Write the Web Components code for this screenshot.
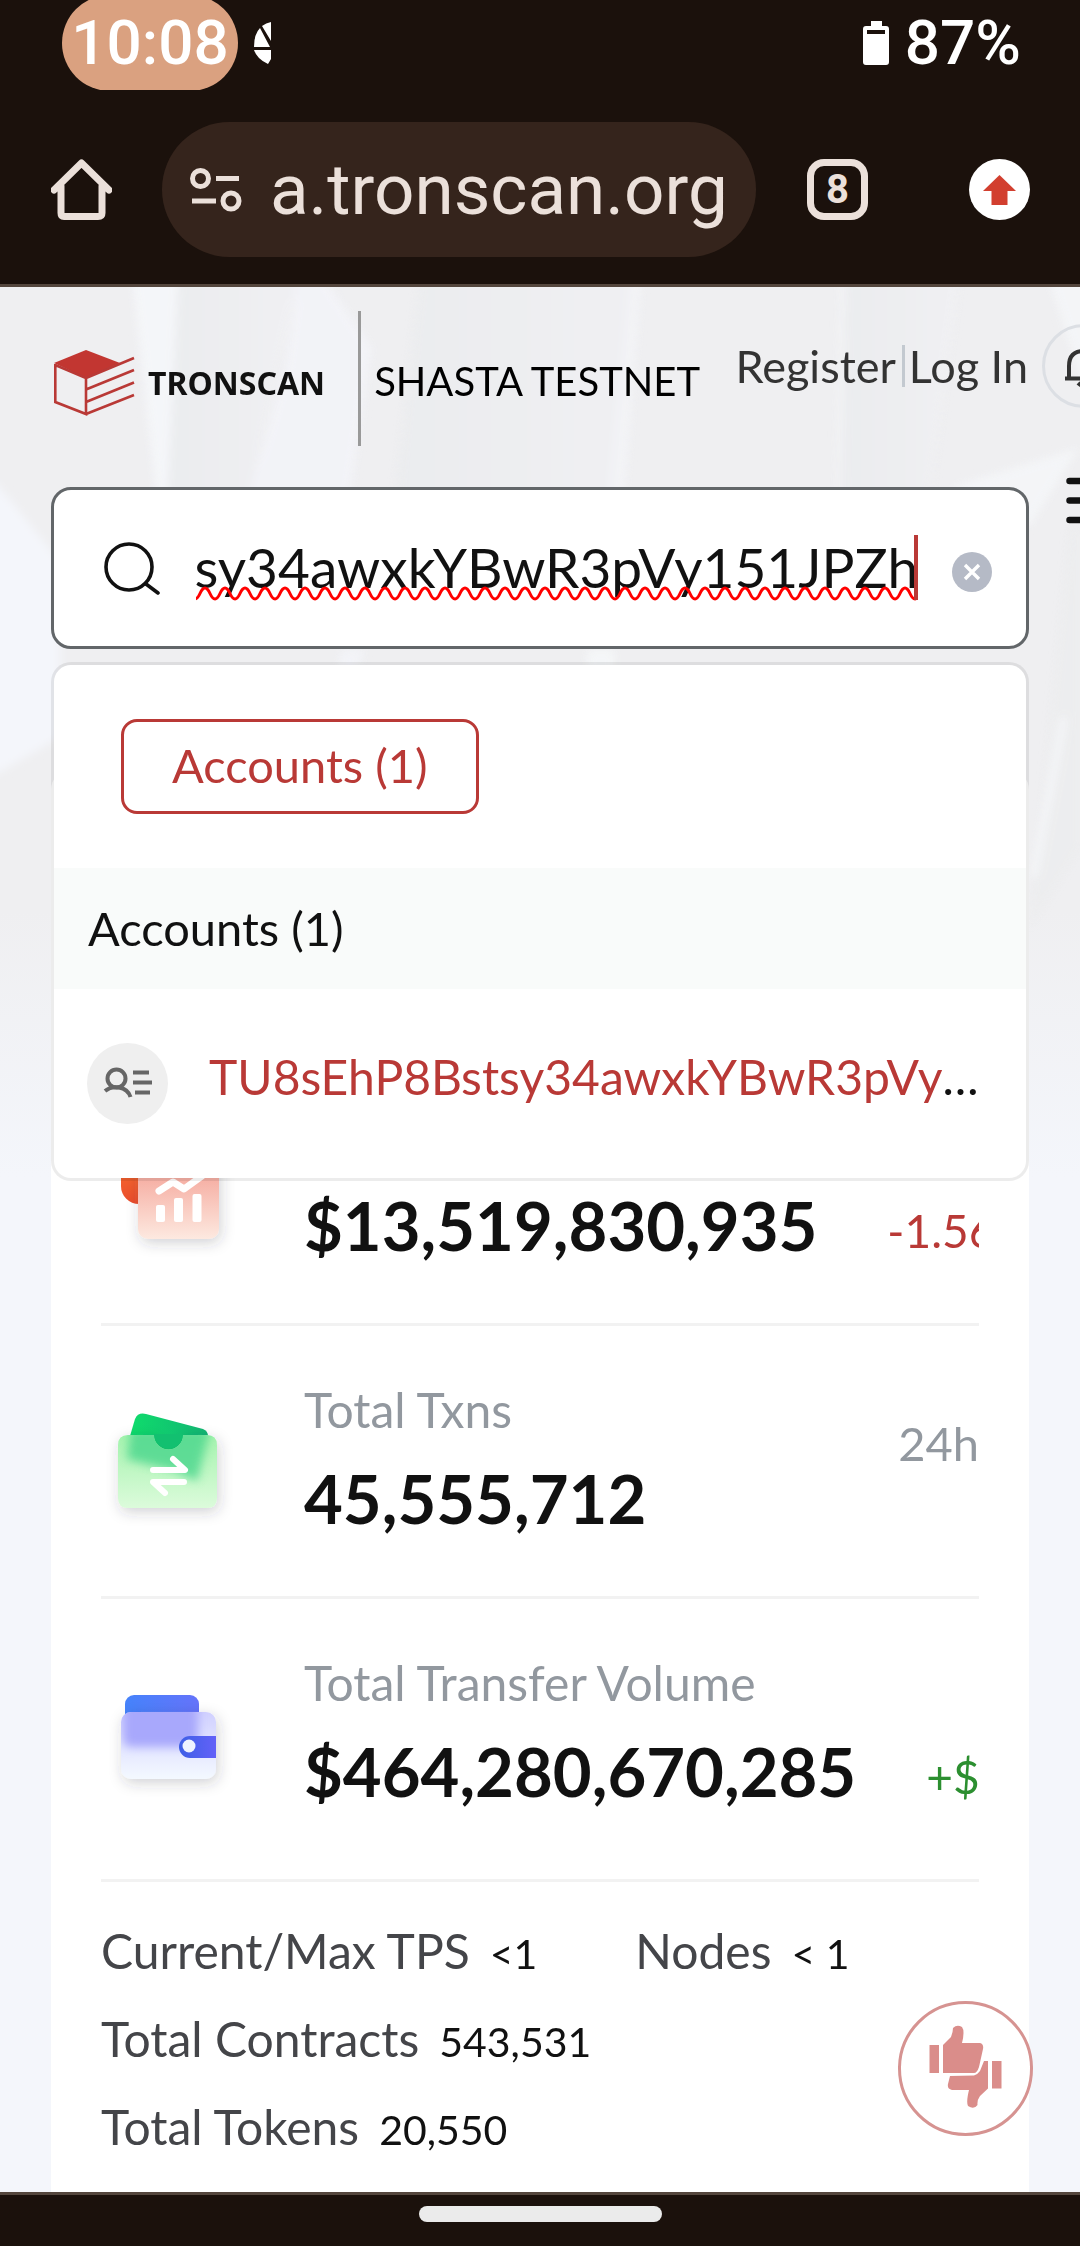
<!DOCTYPE html>
<html lang="en">
<head>
<meta charset="utf-8">
<meta name="viewport" content="width=device-width, initial-scale=1">
<title>TRONSCAN | Shasta Testnet</title>
<style>
  html, body { margin: 0; }
  body {
    --red: #b93936;
    --chrome: #1b110c;
    --chrome-line: #54463d;
    --chrome-ink: #ebe0da;
    display: flex;
    flex-direction: column;
    min-height: 100vh;
    background: #f4f6fb;
    color: #111;
    font-family: Lato, "Open Sans", sans-serif;
    overflow-x: hidden;
  }
</style>
</head>
<body>
<status-bar time="10:08" battery="87%"></status-bar>
<browser-bar url="a.tronscan.org" tabs="8"></browser-bar>
<scan-page>
  <site-header network="SHASTA TESTNET"></site-header>
  <search-box value="TU8sEhP8Bstsy34awxkYBwR3pVy151JPZh">
    <search-results heading="Accounts (1)" address="TU8sEhP8Bstsy34awxkYBwR3pVy151JPZh"></search-results>
  </search-box>
  <stats-card>
    <stat-row tone="down">
      <icon-chart slot="icon"></icon-chart>
      <span slot="value">$13,519,830,935</span>
      <span slot="delta">-1.56</span>
    </stat-row>
    <stat-row>
      <icon-exchange slot="icon"></icon-exchange>
      <span slot="label">Total Txns</span>
      <span slot="value">45,555,712</span>
      <span slot="period">24h</span>
    </stat-row>
    <stat-row tone="up" last>
      <icon-wallet slot="icon"></icon-wallet>
      <span slot="label">Total Transfer Volume</span>
      <span slot="value">$464,280,670,285</span>
      <span slot="delta">+$</span>
    </stat-row>
    <info-item slot="info" label="Current/Max TPS">&lt;1</info-item>
    <info-item slot="info" label="Nodes">&lt; 1</info-item>
    <info-item slot="info" label="Total Contracts">543,531</info-item>
    <info-item slot="info" label="Total Tokens">20,550</info-item>
  </stats-card>
  <feedback-button slot="floating"></feedback-button>
</scan-page>
<nav-handle></nav-handle>

<script>
  const define = (name, render, after) => customElements.define(name, class extends HTMLElement {
    connectedCallback() {
      if (this.shadowRoot) return;
      this.attachShadow({ mode: 'open' }).innerHTML =
        '<style>*{box-sizing:border-box}svg{display:block}a{color:inherit;text-decoration:none}' +
        'button{font:inherit;color:inherit;background:none;border:0;padding:0;margin:0;cursor:pointer}</style>' +
        render(this);
      if (after) after(this.shadowRoot);
    }
  });
  const attr = (el, name) => el.getAttribute(name) || '';

  define('status-bar', el => `
    <style>
      :host { display: flex; justify-content: space-between; height: 90px; padding: 0 59px 0 62px;
        background: var(--chrome); color: #fff; font: 500 62px/70px Roboto, sans-serif; overflow: hidden; }
      .side { display: flex; align-items: center; gap: 16px; height: 86px; }
      .time { background: #daa180; border-radius: 48px; width: 176px; height: 96px; line-height: 88px; padding-top: 4px; text-align: center; }
    </style>
    <div class="side"><div class="time">${attr(el, 'time')}</div>
      <svg width="17" height="44" viewBox="0 0 17 44" fill="#fff"><path d="M17 1Q12 2 8 5L17 20ZM6 7Q0 13 0 26H16Z M0 29Q3 38 14 43L17 38V29Z"/></svg></div>
    <div class="side"><svg width="26" height="44" viewBox="0 0 26 44"><path fill="#fff" fill-rule="evenodd" d="M8 0H19V5H23Q26 5 26 8V41Q26 44 23 44H3Q0 44 0 41V8Q0 5 3 5H8ZM4 9V13H22V9Z"/></svg>
      <span>${attr(el, 'battery')}</span></div>`);

  define('browser-bar', el => `
    <style>
      :host { display: flex; align-items: center; height: 197px; padding: 5px 50px 0 51px;
        background: var(--chrome); border-bottom: 3px solid var(--chrome-line); box-sizing: border-box; color: var(--chrome-ink); }
      .omni { display: flex; align-items: center; gap: 28px; flex: 1; height: 135px; margin: 0 51px 0 50px; padding: 0 28px;
        border-radius: 68px; background: #35241c; min-width: 0; font: 71px/90px Roboto, sans-serif; }
      .tabs { width: 61px; height: 61px; border: 7px solid; border-radius: 17px; font: 700 40px/47px "Liberation Sans Narrow", Roboto, sans-serif; }
      .update { margin-left: 101px; }
    </style>
    <button aria-label="Home"><svg width="61" height="61" viewBox="0 0 61 61" fill="none" stroke="currentColor" stroke-width="7" stroke-linecap="round" stroke-linejoin="round"><path d="M3 31L30.500 4L58 31M10 27V54Q10 57.500 13 57.500H47Q51 57.500 51 54V27"/></svg></button>
    <div class="omni"><svg width="52" height="44" viewBox="0 0 52 44" fill="none" stroke="currentColor" stroke-width="5"><circle cx="10.500" cy="10.500" r="8"/><path d="M26 10.500H49M2 33H26"/><circle cx="41" cy="33" r="8"/></svg><span>${attr(el, 'url')}</span></div>
    <button class="tabs" aria-label="Tabs">${attr(el, 'tabs')}</button>
    <button class="update" aria-label="Update"><svg width="61" height="61" viewBox="0 0 61 61"><circle cx="30.500" cy="30.500" r="30.500" fill="#fff"/><path fill="#d23f2f" d="M30.500 16L47 32H38.500V46H22.500V32H14Z"/></svg></button>`);

  define('scan-page', () => `
    <style>
      :host { display: block; position: relative; flex: 1; overflow: hidden; }
      .bg { position: absolute; inset: 0 0 auto 0; width: 100%; height: 890px; }
      ::slotted([slot=floating]) { position: absolute; right: 47px; bottom: 56px; }
      main { position: relative; }
    </style>
    <svg class="bg" viewBox="0 0 1080 890" preserveAspectRatio="none" aria-hidden="true">
      <defs>
        <linearGradient id="a" x2="0" y2="1"><stop offset=".7" stop-color="#efeff1"/><stop offset="1" stop-color="#f4f6fb"/></linearGradient>
        <linearGradient id="b"><stop stop-color="#e9ebed"/><stop offset="1" stop-color="#f1f1f4"/></linearGradient>
        <filter id="s"><feGaussianBlur stdDeviation="4"/></filter>
      </defs>
      <path fill="url(#a)" d="M0 0H1080V890H0Z"/>
      <path fill="#f4f6fb" filter="url(#s)" d="M-9 190L20 225L60 275V450L-9 490Z"/>
      <g filter="url(#s)" opacity=".7">
        <path fill="#f7f9fc" d="M132 -9H178L168 210H156Z"/>
        <path fill="url(#b)" d="M178 -9H300L250 210H168Z"/>
        <path fill="#f4f5fa" d="M298 -9H325L372 60L350 210H248L285 80Z"/>
        <path fill="url(#b)" d="M420 -9H640L612 210H395Z"/>
        <path fill="#f4f5f8" d="M632 -9H642L625 210H608Z"/>
        <path fill="#f5f6f8" d="M840 -9H846L840 210H836Z"/>
        <path fill="url(#b)" d="M846 -9H960L930 210H842Z"/>
        <path fill="#f6f8fa" d="M950 200L1080 160L1030 240Z"/>
        <path fill="#f6f8fa" d="M1048 -9L1090 120V-9Z"/>
        <path fill="#e9ebec" d="M1070 240L1030 640L1080 560V240Z" opacity=".5"/>
        <path fill="#f6f8fa" d="M1060 430L1030 590H1038L1068 430Z"/>
        <path fill="#f4f6fb" d="M342 362H365L355 390H335Z"/>
        <path fill="#f7f9fb" d="M588 362H615V390H584Z"/>
      </g>
    </svg>
    <main><slot></slot></main><slot name="floating"></slot>`);

  define('site-header', el => `
    <style>
      :host { display: flex; align-items: center; height: 200px; box-sizing: border-box; padding: 24px 0 41px 54px; white-space: nowrap; }
      .logo { display: flex; align-items: center; gap: 14px; padding-top: 8px; font: 700 32px/40px "Noto Sans", sans-serif; }
      .net { margin-left: 33px; border-left: 3px solid #999; padding-left: 13px; padding-top: 6px; font-size: 40px; line-height: 129px; color: #000; }
      nav { display: flex; align-items: center; margin-left: auto; padding-bottom: 26px; font-size: 45px; line-height: 54px; color: #333; }
      .sep { width: 3px; height: 42px; margin: 0 4px 0 6px; background: #c3c9d0; }
      .bell { flex: 0 0 38px; width: 38px; margin-left: 14px; }
      svg { overflow: visible; }
    </style>
    <a class="logo" href="#">
      <svg width="80" height="66" viewBox="0 0 80 66" fill="none" stroke="#b93936" stroke-width="2.600"><path fill="#c23631" stroke="none" d="M32 0L66 13L32 28L0 13Z"/><path d="M1.300 14V52L32 64V28L1.300 15M32 28L80 8M32 39.500L80 20M32 52L80 32.500M32 64L80 45"/></svg>
      <span>TRONSCAN</span></a>
    <span class="net">${attr(el, 'network')}</span>
    <nav><a href="#">Register</a><span class="sep"></span><a href="#">Log In</a>
      <button class="bell" aria-label="Notifications"><svg width="84" height="84" viewBox="0 0 84 84" fill="none"><circle cx="42" cy="42" r="40.500" stroke="#dcdfe4" stroke-width="3"/><path stroke="#333" stroke-width="4" d="M23 54.500H61M27 54V42Q27 27 42 27Q57 27 57 42V54"/><path stroke="#333" stroke-width="4" d="M36 59Q42 65 48 59"/></svg></button></nav>`);

  define('search-box', el => `
    <style>
      :host { display: flex; position: relative; z-index: 2; padding-left: 51px; }
      .box { display: flex; align-items: center; flex: 1; min-width: 0; height: 162px; padding: 0 34px 0 50px;
        background: #fff; border: 3px solid #626669; border-radius: 20px; }
      .field { position: relative; flex: 1; min-width: 0; margin: 0 34px 0 35px; }
      input { display: block; width: 100%; height: 84px; padding: 0 0 2px; border: 0; outline: 0; background: none; color: #111; font: 55px/82px Lato, sans-serif; }
      .wave { position: absolute; left: 0; bottom: 9px; width: 100%; height: 15px; }
      .caret { position: absolute; right: 0; top: 9px; width: 4px; height: 65px; background: var(--red); }
      .clear { padding-top: 8px; }
      .menu { flex: 0 0 14px; width: 14px; margin: -10px 0 0 37px; align-self: flex-start; }
      .menu svg { overflow: visible; }
      .drop { position: absolute; top: calc(100% + 13px); left: 51px; right: 51px; }
    </style>
    <div class="box">
      <svg width="57" height="53" viewBox="0 0 57 53" fill="none" stroke="#111" stroke-width="3.600" stroke-linecap="round"><circle cx="25" cy="25" r="23"/><path d="M42 42L54 51"/></svg>
      <div class="field"><input type="text" aria-label="Search" spellcheck="false" value="${attr(el, 'value')}">
        <svg class="wave" aria-hidden="true"><defs><pattern id="w" width="20" height="15" patternUnits="userSpaceOnUse"><path d="M-11 2C-6 2-6 13 -1 13S4 2 9 2S14 13 19 13S24 2 29 2" fill="none" stroke="#f00" stroke-width="3"/></pattern></defs><rect width="100%" height="15" fill="url(#w)"/></svg>
        <span class="caret"></span></div>
      <button class="clear" aria-label="Clear"><svg width="40" height="40" viewBox="0 0 40 40"><circle cx="20" cy="20" r="20" fill="#b5bac6"/><path d="M13 13L27 27M27 13L13 27" stroke="#fff" stroke-width="3.400"/></svg></button>
    </div>
    <button class="menu" aria-label="Menu"><svg width="14" height="48" viewBox="0 0 14 48" stroke="#111" stroke-width="6.500" stroke-linecap="round"><path d="M3.500 4H50M3.500 23.500H50M3.500 43H50"/></svg></button>
    <div class="drop"><slot></slot></div>`,
    root => { const i = root.querySelector('input'); i.scrollLeft = i.scrollWidth; });

  define('search-results', el => `
    <style>
      :host { display: block; background: #fff; background-clip: padding-box; border: 3px solid rgba(0,0,0,.075); border-radius: 20px; font-size: 47px; line-height: 56px; overflow: hidden; }
      .tabs { padding: 54px 67px; }
      .tab { display: block; height: 95px; padding: 0 48px 4px; border: 3px solid var(--red); border-radius: 16px; color: var(--red); }
      h2 { margin: 0; padding: 0 34px; background: #f9fbfa; font: inherit; line-height: 121px; }
      .row { display: flex; align-items: center; gap: 41px; padding: 54px 40px 54px 33px; }
      .row svg { flex: none; }
      .addr { flex: 1; min-width: 0; overflow: hidden; text-overflow: ellipsis; white-space: nowrap; padding-bottom: 14px; font-size: 48px; }
      .addr a { color: var(--red); }
    </style>
    <div class="tabs"><button class="tab">${attr(el, 'heading')}</button></div>
    <h2>${attr(el, 'heading')}</h2>
    <div class="row">
      <svg width="81" height="81" viewBox="0 0 81 81" fill="none" stroke="#666" stroke-width="4"><circle cx="40.500" cy="40.500" r="40.500" fill="#efefef" stroke="none"/><circle cx="29.500" cy="35.500" r="9"/><path d="M18 48Q24 43 32 44.500Q41 46 43.500 54"/><path d="M46 29.500H62M46 39.500H65M48 49.500H63"/></svg>
      <div class="addr"><a href="#">${attr(el, 'address')}</a></div>
    </div>`);

  define('stats-card', () => `
    <style>
      :host { display: block; margin: 121px 51px 0; padding: 283px 50px 21px; background: #fff; border-radius: 20px 20px 0 0; }
      .info { display: flex; flex-wrap: wrap; column-gap: 98px; padding-top: 25px; }
    </style>
    <slot></slot><div class="info"><slot name="info"></slot></div>`);

  define('stat-row', el => `
    <style>
      :host { display: flex; align-items: center; padding: 52px 0 57px; border-bottom: 3px solid #f2f2f2; white-space: nowrap; overflow: hidden; }
      :host([last]) { padding-bottom: 67px; }
      .icon { flex: 0 0 160px; margin-right: 43px; }
      .text { flex: 1; min-width: 0; }
      .label { min-height: 64px; margin-bottom: 15px; font-size: 48px; line-height: 64px; color: #92989f; }
      .line { display: flex; align-items: flex-end; gap: 70px; }
      .value { font-size: 67px; line-height: 82px; font-weight: 700; }
      .delta { font-size: 46px; line-height: 56px; padding-bottom: 7px; }
      :host([tone=down]) .delta { color: var(--red); }
      :host([tone=up]) .delta { color: #2c8f30; }
      .period { font-size: 47px; line-height: 56px; padding-bottom: 32px; color: #92989f; }
    </style>
    <div class="icon"><slot name="icon"></slot></div>
    <div class="text"><div class="label"><slot name="label"></slot></div>
      <div class="line"><span class="value"><slot name="value"></slot></span><span class="delta"><slot name="delta"></slot></span></div></div>
    <div class="period"><slot name="period"></slot></div>`);

  const icon = (name, art) => define(name, () => `<style>:host{display:block}svg{overflow:visible}</style>
    <svg width="160" height="160" viewBox="0 0 160 160"><defs>
      <filter id="soft" x="-40%" y="-40%" width="180%" height="180%"><feGaussianBlur stdDeviation="5"/></filter>
      <filter id="shadow" x="-40%" y="-40%" width="180%" height="190%"><feDropShadow dy="4" stdDeviation="7" flood-color="#334" flood-opacity=".22"/></filter>
      ${art}</svg>`);

  icon('icon-chart', `
    <linearGradient id="g" x2="0" y2="1"><stop stop-color="#f3998d"/><stop offset="1" stop-color="#fde9e0"/></linearGradient>
    <linearGradient id="h" x2="0" y2="1"><stop stop-color="#ff8030"/><stop offset="1" stop-color="#ea4c2c"/></linearGradient></defs>
    <rect x="20" y="30" width="78" height="68" rx="18" fill="url(#h)"/>
    <rect x="37" y="48" width="81" height="85" rx="10" fill="url(#g)" filter="url(#shadow)"/>
    <g fill="none" stroke="#fff" stroke-width="7" stroke-linecap="round" stroke-linejoin="round"><path d="M58 85L72 76L83 83L101 70"/></g>
    <g fill="#fff"><rect x="55" y="99" width="9" height="17" rx="2"/><rect x="73" y="92" width="9" height="24" rx="2"/><rect x="91.500" y="88" width="9" height="28" rx="2"/></g>`);

  icon('icon-exchange', `
    <linearGradient id="g" x2="0" y2="1"><stop stop-color="#a5f3ae"/><stop offset="1" stop-color="#dcfbdb"/></linearGradient>
    <linearGradient id="h"><stop stop-color="#0fdc6c"/><stop offset="1" stop-color="#12b573"/></linearGradient>
    <clipPath id="c"><path d="M27 56H53A14.500 14.500 0 0 0 82 56H106Q116 56 116 66V119Q116 129 106 129H27Q17 129 17 119V66Q17 56 27 56Z"/></clipPath></defs>
    <path fill="url(#h)" d="M29 57L34 40Q37 33 45 35L102 50Q107 52 107 57V75H29Z"/>
    <path fill="url(#g)" filter="url(#shadow)" d="M27 56H53A14.500 14.500 0 0 0 82 56H106Q116 56 116 66V119Q116 129 106 129H27Q17 129 17 119V66Q17 56 27 56Z"/>
    <path fill="#12c070" d="M53 55A14.500 14.500 0 0 0 82 55Z"/>
    <g clip-path="url(#c)"><path filter="url(#soft)" fill="#48d68c" opacity=".8" d="M30 50H109L96 102L74 92L26 80Z"/></g>
    <path d="M72 80L84 91H52M83 103H52L64 114" fill="none" stroke="#fff" stroke-width="6" stroke-linecap="round" stroke-linejoin="round"/>`);

  icon('icon-wallet', `
    <linearGradient id="g" x2="0" y2="1"><stop stop-color="#d0d0ff"/><stop offset="1" stop-color="#f4f9ff"/></linearGradient>
    <linearGradient id="h"><stop stop-color="#4583fb"/><stop offset="1" stop-color="#6573fa"/></linearGradient>
    <linearGradient id="k"><stop stop-color="#3d5fe6"/><stop offset="1" stop-color="#6361f8"/></linearGradient>
    <clipPath id="c"><rect x="20" y="60" width="95" height="67" rx="10"/></clipPath></defs>
    <rect x="24" y="43" width="74" height="40" rx="9" fill="url(#h)"/>
    <rect x="20" y="60" width="95" height="67" rx="10" fill="url(#g)" filter="url(#shadow)"/>
    <g clip-path="url(#c)"><rect x="22" y="50" width="75" height="45" rx="8" fill="#a8a8fc" filter="url(#soft)"/></g>
    <path fill="url(#k)" d="M115 84H89A11 11 0 0 0 89 106H115Z"/><circle cx="88" cy="94" r="6.500" fill="#eef3ff"/>`);

  define('info-item', el => `
    <style>
      :host { display: flex; align-items: baseline; gap: 20px; font-size: 48px; line-height: 88px; white-space: nowrap; }
      .k { color: #444549; }
      .v { font-size: 41px; line-height: 48px; }
    </style><span class="k">${attr(el, 'label')}</span><span class="v"><slot></slot></span>`);

  define('feedback-button', () => `
    <style>:host { display: block; } button { display: block; }</style>
    <button aria-label="Feedback"><svg width="135" height="135" viewBox="0 0 135 135" fill="#da8d8a">
      <circle cx="67.500" cy="67.500" r="66" fill="#fff" stroke="#d69391" stroke-width="3"/>
      <path d="M31.500 44H41V72H31.500ZM45 44L53 36Q55 31 55 27Q59 23 64 26Q67 30 64 42H82Q86 43 85 48L81 66Q79 72 76 72H45Z"/>
      <path d="M94 60H103.500V87.500H94ZM90 60V87.500L82 95Q79 99 79.500 104Q76 109 70 105Q68 101 71 89H54Q49 88 50 83L52 75L76 74.500Q80 73 82 70L86 60Z"/></svg></button>`);

  define('nav-handle', () => `
    <style>
      :host { display: flex; justify-content: center; height: 54px; box-sizing: border-box; padding-top: 11px; background: var(--chrome); border-top: 3px solid var(--chrome-line); }
      div { width: 243px; height: 16px; border-radius: 8px; background: #ebebeb; }
    </style><div></div>`);
</script>
</body>
</html>
